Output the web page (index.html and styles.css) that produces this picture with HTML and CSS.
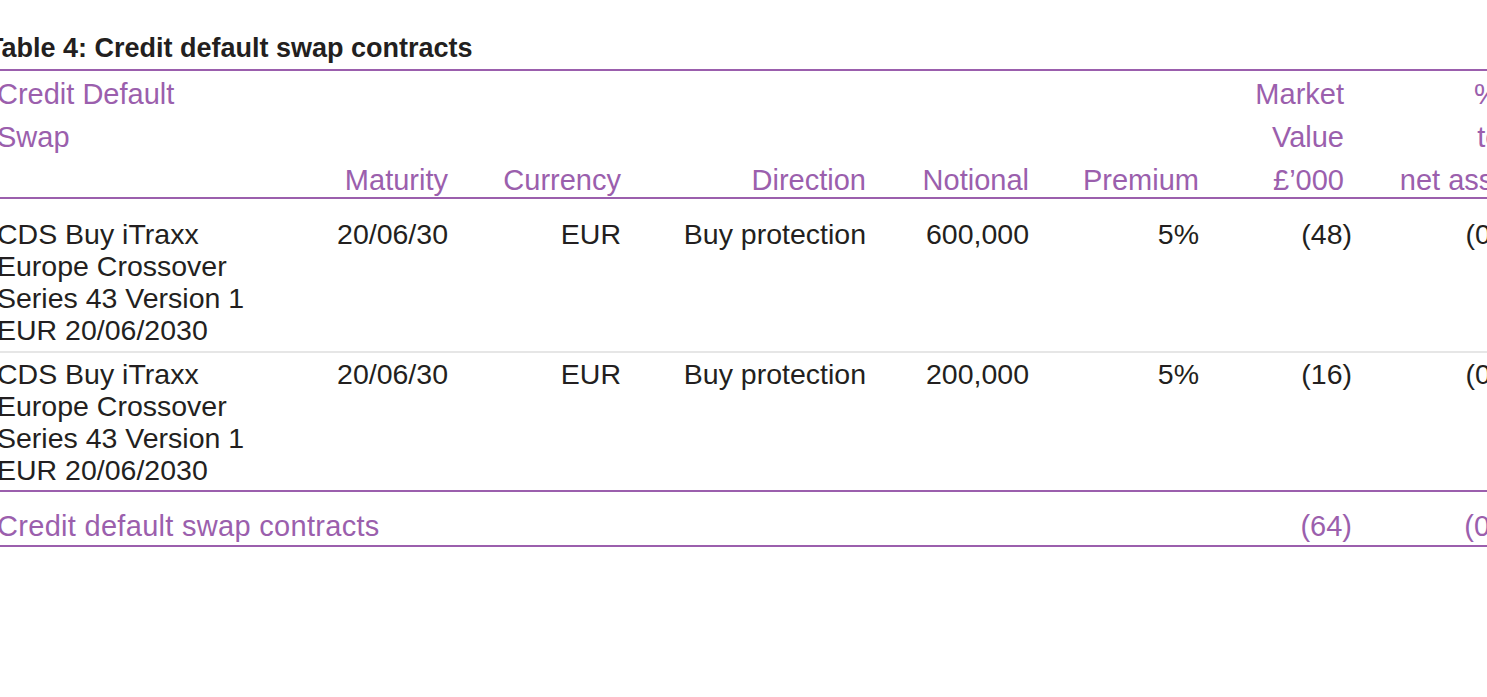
FILE: index.html
```html
<!DOCTYPE html>
<html lang="en">
<head>
<meta charset="utf-8">
<title>Table 4: Credit default swap contracts</title>
<link rel="stylesheet" href="styles.css">
</head>
<body>
<div class="page">
  <h1 class="title">Table 4: Credit default swap contracts</h1>
  <table class="cds">
    <colgroup>
      <col class="c-name">
      <col class="c-mat">
      <col class="c-cur">
      <col class="c-dir">
      <col class="c-not">
      <col class="c-prem">
      <col class="c-mv">
      <col class="c-pct">
    </colgroup>
    <thead>
      <tr>
        <th class="left top"><div class="hd">Credit Default<br>Swap</div></th>
        <th><div class="hd">Maturity</div></th>
        <th><div class="hd">Currency</div></th>
        <th><div class="hd">Direction</div></th>
        <th><div class="hd">Notional</div></th>
        <th><div class="hd">Premium</div></th>
        <th><div class="hd">Market<br>Value<br>£’000</div></th>
        <th><div class="hd">% of<br>total<br>net assets</div></th>
      </tr>
    </thead>
    <tbody>
      <tr class="row first">
        <td class="left">CDS Buy iTraxx<br>Europe Crossover<br>Series 43 Version 1<br>EUR 20/06/2030</td>
        <td>20/06/30</td>
        <td>EUR</td>
        <td>Buy protection</td>
        <td>600,000</td>
        <td>5%</td>
        <td><span class="neg">(48)</span></td>
        <td><span class="neg">(0.01)</span></td>
      </tr>
      <tr class="row last">
        <td class="left">CDS Buy iTraxx<br>Europe Crossover<br>Series 43 Version 1<br>EUR 20/06/2030</td>
        <td>20/06/30</td>
        <td>EUR</td>
        <td>Buy protection</td>
        <td>200,000</td>
        <td>5%</td>
        <td><span class="neg">(16)</span></td>
        <td><span class="neg">(0.00)</span></td>
      </tr>
    </tbody>
    <tfoot>
      <tr class="total">
        <td class="left label" colspan="6">Credit default swap contracts</td>
        <td><span class="neg">(64)</span></td>
        <td><span class="neg">(0.01)</span></td>
      </tr>
    </tfoot>
  </table>
</div>
</body>
</html>
```
FILE: styles.css
```css
html, body {
  margin: 0;
  padding: 0;
  overflow: hidden;
  background: #ffffff;
}

body {
  font-family: "Liberation Sans", Arial, Helvetica, sans-serif;
  color: #231f20;
}

.page {
  margin-left: -13px;
  padding-top: 33px;
  width: 1555px;
}

.title {
  margin: 0 0 6px 0;
  font-size: 27px;
  line-height: 30px;
  font-weight: bold;
  color: #231f20;
}

.cds {
  width: 1555px;
  table-layout: fixed;
  border-collapse: separate;
  border-spacing: 0;
}

.c-name { width: 313px; }
.c-mat { width: 158px; }
.c-cur { width: 173px; }
.c-dir { width: 245px; }
.c-not { width: 163px; }
.c-prem { width: 170px; }
.c-mv { width: 145px; }
.c-pct { width: 188px; }

.cds th {
  font-size: 29px;
  font-weight: normal;
  color: #9b5fad;
  text-align: right;
  vertical-align: bottom;
  padding: 2px 10px 0 10px;
  border-top: 2px solid #9b5fad;
  border-bottom: 2px solid #9b5fad;
  white-space: nowrap;
}

.cds th.top {
  vertical-align: top;
}

.hd {
  line-height: 43px;
  margin-bottom: -5px;
}

.cds td {
  font-size: 28.5px;
  line-height: 32px;
  text-align: right;
  vertical-align: top;
  white-space: nowrap;
  padding: 5px 10px 4px 10px;
}

.cds .left {
  text-align: left;
}

.row.first td {
  padding-top: 19px;
  padding-bottom: 5px;
  border-bottom: 2px solid #e6e6e6;
}

.row.last td {
  border-bottom: 2px solid #9b5fad;
}

.total td {
  font-size: 29px;
  color: #9b5fad;
  padding-top: 18px;
  padding-bottom: 3px;
  border-bottom: 2px solid #9b5fad;
}

.total .label {
  letter-spacing: 0.3px;
}

.neg {
  margin-right: -8px;
}
```
